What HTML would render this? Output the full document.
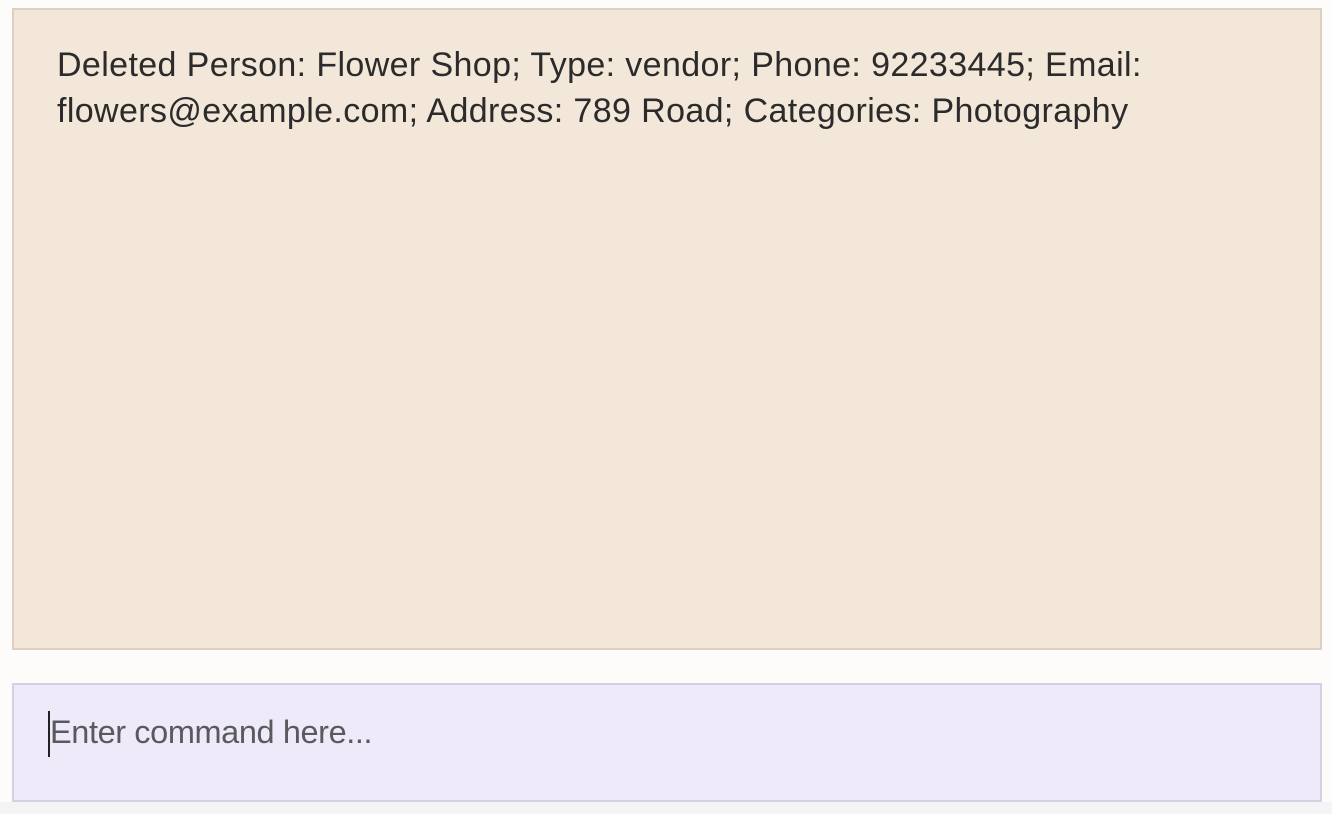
<!DOCTYPE html>
<html><head><meta charset="utf-8"><style>
html,body{margin:0;padding:0;width:1332px;height:814px;background:#fdfcfb;overflow:hidden;font-family:"Liberation Sans",sans-serif;}
.top{position:absolute;left:12px;top:8px;width:1306px;height:638px;background:#f3e7da;border:2px solid #ddd0c3;}
.top p{position:absolute;left:43px;top:32px;margin:0;font-size:34px;letter-spacing:0.38px;line-height:46px;color:#2b2b2b;white-space:nowrap;}
.cmd{position:absolute;left:12px;top:683px;width:1306px;height:115px;background:#eeeafa;border:2px solid #d6d0e4;}
.cmd span{position:absolute;left:36px;top:27px;font-size:32.5px;letter-spacing:-0.4px;line-height:40px;color:#5a5a5e;}
.caret{position:absolute;left:34px;top:26px;width:2px;height:46px;background:#222;}
.bottom{position:absolute;left:0;top:802px;width:1332px;height:12px;background:#f4f4f4;}
</style></head><body>
<div class="top"><p>Deleted Person: Flower Shop; Type: vendor; Phone: 92233445; Email:<br>flowers@example.com; Address: 789 Road; Categories: Photography</p></div>
<div class="cmd"><div class="caret"></div><span>Enter command here...</span></div>
<div class="bottom"></div>
</body></html>
